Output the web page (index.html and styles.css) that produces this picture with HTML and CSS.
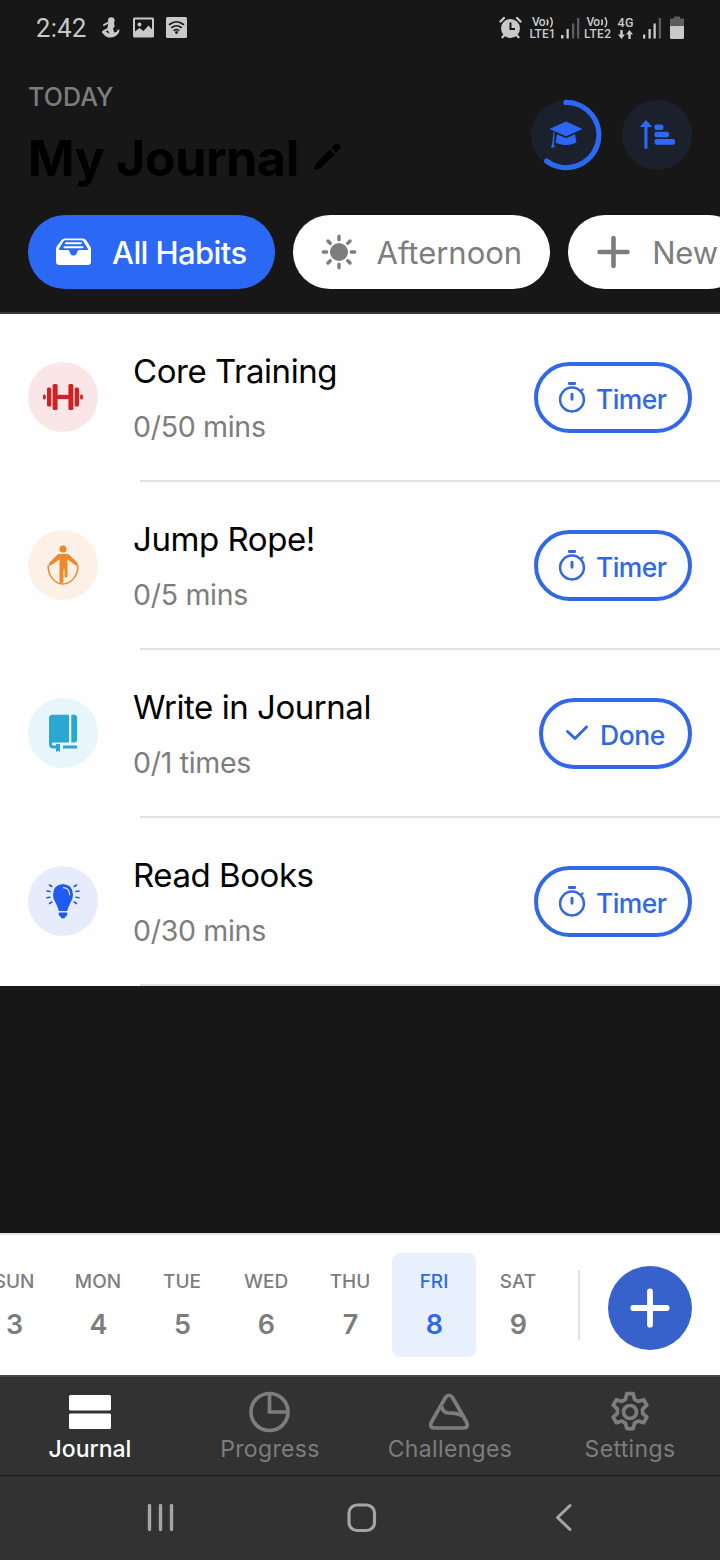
FILE: index.html
```html
<!DOCTYPE html>
<html lang="en">
<head>
<meta charset="utf-8">
<title>My Journal</title>
<link rel="stylesheet" href="styles.css">
</head>
<body>
<div class="app">
  <div class="status">
    <span class="clock">2:42</span>
    <svg class="status-left" width="92" height="24" viewBox="98 16 92 24" fill="#c9c9c9">
      <circle cx="111.300" cy="20.500" r="3.300"/>
      <path d="M108.500 22.500h5.500l.6 4-1.600 2 1.200 4 2.600-.8 1-2.300 1.700.4c-.3 4-3.500 7.700-9 7.700-2.600 0-4.500-.8-6.300-2.600l-2.200-2.400c0-1.200.7-2 2.300-2.700l3-1.500z"/>
      <path d="M108.500 22.500l-4.500 2.500" stroke="#c9c9c9" stroke-width="2" stroke-linecap="round"/>
      <path d="M105.500 31.200l2.500-.8 1.500 3.500z" fill="#171717"/>
      <path fill-rule="evenodd" d="M134.500 17.500h18a1.500 1.500 0 0 1 1.500 1.500v17a1.500 1.500 0 0 1-1.500 1.500h-18a1.500 1.500 0 0 1-1.500-1.500V19a1.500 1.500 0 0 1 1.500-1.500zM135 19.500v12l4.500-3.500 4 3 5-5.500 3.500 4v-10z"/>
      <circle cx="139.500" cy="24.500" r="2"/>
      <rect x="166" y="17" width="21" height="21" rx="1.500"/>
      <g fill="none" stroke="#171717" stroke-width="1.600" stroke-linecap="round"><path d="M169.500 24.500q7-5.500 14 0M171.800 27.500q4.700-3.600 9.400 0M174.100 30.300q2.400-1.700 4.800 0"/></g>
      <circle cx="176.500" cy="32.500" r="1.400" fill="#171717"/>
    </svg>
    <svg class="status-right" width="188" height="26" viewBox="499 15 188 26" fill="#c9c9c9">
      <circle cx="510.500" cy="28.500" r="9.500"/>
      <g stroke="#c9c9c9" stroke-width="2.400" stroke-linecap="round"><path d="M500.500 21.500l3.500-3.500M520.500 21.500l-3.500-3.500M504.500 35l-2 2.200M516.500 35l2 2.200"/></g>
      <path d="M510.500 22.500v6.500h4.500" fill="none" stroke="#171717" stroke-width="2"/>
      <g class="net">
        <text x="532" y="26" textLength="13.500">Vo</text><text x="586.500" y="26" textLength="13.500">Vo</text>
        <text x="529.500" y="38" textLength="26">LTE1</text><text x="584" y="38" textLength="27">LTE2</text>
        <text class="net-lg" x="617.500" y="27" textLength="16">4G</text>
      </g>
      <g fill="none" stroke="#c9c9c9" stroke-width="1.500"><path d="M547 19.500q1.800 2.800 0 5.800M550.300 17.300q4 5 0 10M601.500 19.500q1.800 2.800 0 5.800M604.800 17.300q4 5 0 10"/></g>
      <path d="M561 35h2.500v3.500H561zM566.500 29h2.300v9.500h-2.300z"/>
      <path d="M572 23.500h2.300v15H572zM577 18h2.300v20.500H577z" fill="#5d5d5d"/>
      <path d="M620.300 30h2.400v4.500h2.300l-3.500 4.500-3.500-4.500h2.300zM628.300 39h2.400v-4.500h2.300l-3.500-4.500-3.500 4.500h2.300z"/>
      <path d="M643 34.500h2.300v4H643zM648.500 29h2.300v9.500h-2.300zM653.500 23.500h2.300v15h-2.300z"/>
      <path d="M658.700 18h2.300v20.500h-2.300z" fill="#5d5d5d"/>
      <path d="M674 16.500h6v2h4v8h-14v-8h4z" fill="#5d5d5d"/>
      <path d="M670 26h14v11.500a1.500 1.500 0 0 1-1.500 1.500h-11a1.500 1.500 0 0 1-1.500-1.500z"/>
    </svg>
  </div>

  <header class="header">
    <div class="heading">
      <div class="today">TODAY</div>
      <div class="title-row">
        <h1 class="title">My Journal</h1>
        <svg width="28" height="28" viewBox="313 144 28 28"><path d="M314 170l1.500-6 14.500-14.500 4.800 4.700L320.500 168.500zM331.500 148l3-3q3-2.600 5 0 2 2.500-.2 4.600l-3 3z"/></svg>
      </div>
    </div>
    <div class="actions">
      <svg width="72" height="72" viewBox="530.500 99.500 72 72">
        <circle cx="566.500" cy="135.500" r="35" fill="#1a212d"/>
        <path d="M566.500 102.900a32.600 32.600 0 1 1-19.300 58.700" fill="none" stroke="#2b68f5" stroke-width="5.200" stroke-linecap="round"/>
        <g fill="#2b68f5"><path d="M566.500 122l16.500 7.500-16.500 7.300-16.500-7.300z"/><path d="M557.500 134.800l9 4 9-4 1.500 8q-4 2.700-10.500 2.700t-10.500-2.700z"/><path d="M554 132.500l1.200.5-.8 11.500 1 3.500h-4l1.300-3.500z"/></g>
      </svg>
      <svg width="70" height="70" viewBox="622 100 70 70">
        <circle cx="657" cy="135" r="35" fill="#1a212d"/>
        <g fill="#2b68f5"><path d="M644.300 147.500a1.600 1.600 0 0 0 3.200 0v-20.500h4q.6-.3 0-1l-5.500-6-5.500 6q-.6.700 0 1h3.800z"/><rect x="654.500" y="124.500" width="9" height="5.500" rx="2"/><rect x="654.500" y="131.700" width="14.500" height="5.500" rx="2"/><rect x="654.500" y="139" width="20.500" height="5.800" rx="2"/></g>
      </svg>
    </div>
  </header>

  <div class="chips">
    <div class="chip chip-active">
      <svg width="36" height="28" viewBox="56 238.500 36 28"><path fill-rule="evenodd" fill="#fff" d="M64.500 239h18.500q2 0 3 1.500l4 6q1 1.500 1 3.500v12q0 3.500-3.500 3.500h-28q-3.500 0-3.500-3.500v-12q0-2 1-3.500l4.500-6q1-1.500 3-1.500zM65 240.800q-1 0-1.500.8L59 249.500q-.5 1 .5 1h8q1.500 0 2 1.300 1 4.200 4 4.200t4-4.200q.5-1.300 2-1.300h8q1 0 .5-1l-5-7.900q-.5-.8-1.500-.8z"/><path d="M66 243.800h15M64.500 247.700h18" stroke="#fff" stroke-width="2" stroke-linecap="round"/></svg>
      <span>All Habits</span>
    </div>
    <div class="chip">
      <svg width="36" height="36" viewBox="320.500 234.500 36 36"><circle cx="338.500" cy="252.500" r="9" fill="#7d7d7d"/><path stroke="#7d7d7d" stroke-width="3.400" stroke-linecap="round" d="M338.500 236.800v3.400M338.500 264.800v3.400M322.800 252.500h3.400M350.800 252.500h3.400M327.500 241.500l2.200 2.200M347.300 261.300l2.200 2.200M349.500 241.500l-2.200 2.200M329.700 261.300l-2.200 2.200"/></svg>
      <span class="afternoon">Afternoon</span>
    </div>
    <div class="chip">
      <svg width="36" height="36" viewBox="596 234.500 36 36"><path stroke="#7d7d7d" stroke-width="4.600" stroke-linecap="round" d="M599.500 252.500h28M613.500 238.500v28"/></svg>
      <span class="new">New</span>
    </div>
  </div>

  <main class="habits">
    <div class="habit">
      <div class="badge red"><svg width="70" height="70" viewBox="28 362 70 70" fill="#d02224"><rect x="43" y="394.500" width="2.700" height="5" rx="1.300"/><rect x="47" y="387.500" width="4.300" height="19" rx="1.500"/><rect x="52.600" y="384" width="5" height="26" rx="1.500"/><path d="M57 394.800h12v4.200H57z"/><rect x="68.400" y="384" width="5" height="26" rx="1.500"/><rect x="74.700" y="387.500" width="4.300" height="19" rx="1.500"/><rect x="80.200" y="394.500" width="2.700" height="5" rx="1.300"/></svg></div>
      <div class="text"><div class="name">Core Training</div><div class="goal">0/50 mins</div></div>
      <div class="btn"><svg class="timer" width="28" height="32" viewBox="0 0 28 32"><g fill="none" stroke="#3168e0" stroke-linecap="round"><circle cx="14" cy="18.500" r="11.900" stroke-width="2.500"/><path stroke-width="2.900" d="M11.300 2.500h5.400M14 13.200v5"/><path stroke-width="2.200" d="M23.300 9.500l1.300-1"/></g></svg><span>Timer</span></div>
    </div>
    <div class="habit">
      <div class="badge orange"><svg width="70" height="70" viewBox="28 530 70 70" fill="#ec8a2b"><circle cx="63" cy="549" r="3.600"/><path d="M59 554h8q1.500 0 2.500 1l8.500 8.500-1.300 2.500-9.200-6.500v16.500q0 1.500-1.500 1.500t-1.500-1.500V569h-1v12.500q0 1.500-2 1.500t-2-1.500v-22l-9.500 6.500-1.500-2.500 8.500-8.500q1-1 2-1z"/><path d="M48.200 565c-.5 11 7 19 14.800 19s15.300-8 14.800-19" fill="none" stroke="#ec8a2b" stroke-width="1.500"/></svg></div>
      <div class="text"><div class="name">Jump Rope!</div><div class="goal">0/5 mins</div></div>
      <div class="btn"><svg class="timer" width="28" height="32" viewBox="0 0 28 32"><g fill="none" stroke="#3168e0" stroke-linecap="round"><circle cx="14" cy="18.500" r="11.900" stroke-width="2.500"/><path stroke-width="2.900" d="M11.300 2.500h5.400M14 13.200v5"/><path stroke-width="2.200" d="M23.300 9.500l1.300-1"/></g></svg><span>Timer</span></div>
    </div>
    <div class="habit">
      <div class="badge cyan"><svg width="70" height="70" viewBox="28 698 70 70" fill="#2ba8d1"><path d="M52.500 714.800H69v27.700H53.500q-1.700 0-1.700 1.300 0 1.700 1.700 1.700h2.500v3h-2.500q-4.500 0-4.500-4.500v-25.700q0-3.500 3.500-3.500z"/><path d="M71.300 714.800h2.500q3.300 0 3.300 3.300v21.200q0 3.200-3.300 3.200h-2.500zM56 744h4v8l-2-1.300-2 1.300zM63 745.500h14v3H63z"/></svg></div>
      <div class="text"><div class="name">Write in Journal</div><div class="goal">0/1 times</div></div>
      <div class="btn done"><svg class="check" width="26" height="20" viewBox="0 0 26 20"><path d="M3.500 7.500l7.500 7L22.500 3" fill="none" stroke="#3168e0" stroke-width="3" stroke-linecap="round" stroke-linejoin="round"/></svg><span>Done</span></div>
    </div>
    <div class="habit">
      <div class="badge blue"><svg width="70" height="70" viewBox="28 866 70 70" fill="#1f5bf2"><path d="M63 880q10 .5 10 11 0 3.500-2.500 7.500l-2 4.500-1.300 4h-8.400l-1.300-4-2-4.500Q53 894.500 53 891q0-10.500 10-11zM58.800 908.500h8.400v2.300q0 1.300-1.700 1.600 0 2-2.500 2t-2.500-2q-1.700-.3-1.700-1.600z" transform="translate(0 4)"/><path d="M63.500 887.700q6 .5 6.200 7" fill="none" stroke="#e7ecfd" stroke-width="1.200" stroke-linecap="round"/><path fill="none" stroke="#1f5bf2" stroke-width="1.600" stroke-linecap="round" d="M49.500 885l2.300 1.500M47 891l3 .5M47 897.800l3-.5M49.500 903.500l2.300-1.500M76.500 885l-2.300 1.500M79 891l-3 .5M79 897.800l-3-.5M76.500 903.500l-2.300-1.500"/></svg></div>
      <div class="text"><div class="name">Read Books</div><div class="goal">0/30 mins</div></div>
      <div class="btn"><svg class="timer" width="28" height="32" viewBox="0 0 28 32"><g fill="none" stroke="#3168e0" stroke-linecap="round"><circle cx="14" cy="18.500" r="11.900" stroke-width="2.500"/><path stroke-width="2.900" d="M11.300 2.500h5.400M14 13.200v5"/><path stroke-width="2.200" d="M23.300 9.500l1.300-1"/></g></svg><span>Timer</span></div>
    </div>
  </main>

  <section class="week">
    <div class="days">
      <div class="day"><span class="dow">SUN</span><span class="num">3</span></div>
      <div class="day"><span class="dow">MON</span><span class="num">4</span></div>
      <div class="day"><span class="dow">TUE</span><span class="num">5</span></div>
      <div class="day"><span class="dow">WED</span><span class="num">6</span></div>
      <div class="day"><span class="dow">THU</span><span class="num">7</span></div>
      <div class="day selected"><span class="dow">FRI</span><span class="num">8</span></div>
      <div class="day"><span class="dow">SAT</span><span class="num">9</span></div>
    </div>
    <div class="divider"></div>
    <svg class="add" width="84" height="84" viewBox="0 0 84 84"><circle cx="42" cy="42" r="42" fill="#3762cb"/><path d="M25.300 42h33.400M42 25.300v33.400" stroke="#fff" stroke-width="5.800" stroke-linecap="round"/></svg>
  </section>

  <nav class="tabs">
    <div class="tab current"><svg width="44" height="44" viewBox="68 1390 44 44" fill="#fff"><rect x="69" y="1395" width="42" height="15.500" rx="1.500"/><rect x="69" y="1413.500" width="42" height="15.500" rx="1.500"/></svg><span>Journal</span></div>
    <div class="tab"><svg width="44" height="44" viewBox="248 1390 44 44" fill="none" stroke="#7d7d7d" stroke-width="3.700"><circle cx="269.500" cy="1412" r="18.500"/><path d="M269.500 1393.500V1412H288"/></svg><span>Progress</span></div>
    <div class="tab"><svg width="44" height="44" viewBox="428 1390 44 44" fill="none" stroke="#7d7d7d" stroke-width="3.700" stroke-linejoin="round"><path d="M445.500 1397.500q3.500-4.500 7 0l14.300 25q2.200 5.500-3.800 5.500h-28q-6 0-3.800-5.500z"/><path d="M441.500 1406.500q1.500 6 7 6.500c5 .5 9.500-.5 13.500 3"/></svg><span>Challenges</span></div>
    <div class="tab"><svg width="44" height="44" viewBox="608 1390 44 44" fill="none" stroke="#7d7d7d" stroke-width="3.700" stroke-linejoin="round"><circle cx="630" cy="1412" r="6.500"/><path d="M626.800 1393.700h6.400l1.300 5.600 3.600 2.100 5.500-1.700 3.200 5.500-4.200 3.900v4.200l4.200 3.900-3.200 5.500-5.500-1.700-3.600 2.100-1.300 5.600h-6.400l-1.300-5.600-3.600-2.100-5.500 1.700-3.200-5.500 4.200-3.900v-4.200l-4.200-3.900 3.200-5.500 5.500 1.700 3.600-2.100z"/></svg><span>Settings</span></div>
  </nav>
  <div class="system">
    <svg width="720" height="84" viewBox="0 1476 720 84" fill="none" stroke="#a5a5a5" stroke-linecap="round"><path stroke-width="3.400" d="M149.500 1505.500v24M160.500 1505.500v24M171.500 1505.500v24"/><rect x="349" y="1505" width="25.500" height="25.500" rx="8" stroke-width="3.200"/><path stroke-width="3" stroke-linejoin="round" d="M570 1505.500l-12.500 12 12.500 12"/></svg>
  </div>
</div>
</body>
</html>
```

FILE: styles.css
```css
* { box-sizing: border-box; }
body { margin: 0; background: #171717; font-family: Inter, "Liberation Sans", sans-serif; }
svg { display: block; flex: none; }
.app { width: 720px; height: 1560px; overflow: hidden; display: flex; flex-direction: column; background: #171717; }

.status { height: 56px; flex: none; display: flex; align-items: center; padding: 0 33px 0 36px; }
.clock { width: 62px; font: 25.500px/30px Roboto, sans-serif; color: #c9c9c9; letter-spacing: .4px; }
.status-right { margin-left: auto; }
.net { font: 500 12px Roboto, sans-serif; }
.net-lg { font-size: 12.500px; }

.header { height: 159px; flex: none; display: flex; justify-content: space-between; padding: 26px 28px 0; }
.today { font-size: 25px; line-height: 30px; font-weight: 500; color: #7d7d7d; letter-spacing: .1px; }
.title-row { display: flex; align-items: center; gap: 14px; margin-top: 15px; }
.title { margin: 0; font-size: 50px; line-height: 62px; font-weight: 700; color: #000; letter-spacing: -.35px; }
.actions { display: flex; gap: 20px; align-items: center; height: 72px; margin-top: 17px; }

.chips { height: 97px; flex: none; display: flex; gap: 18px; padding-left: 28px; }
.chip { flex: none; height: 74px; border-radius: 37px; background: #fff; color: #7d7d7d; display: flex; align-items: center; gap: 20px; padding: 0 28px; font-size: 31px; letter-spacing: 0; white-space: nowrap; }
.chip-active { background: #2b68f5; color: #fff; font-weight: 500; letter-spacing: -.6px; }
.new { letter-spacing: -.2px; }

.habits { flex: none; border-top: 2px solid #3b3a3b; background: #fff; }
.habit { height: 168px; display: flex; align-items: flex-start; padding: 48px 28px 0; background: linear-gradient(#e2e2e2, #e2e2e2) 140px 166px / 580px 2px no-repeat #fefefe; }
.badge { width: 70px; height: 70px; border-radius: 50%; flex: none; }
.red { background: #fbe6e7; }
.orange { background: #fdf1e7; }
.cyan { background: #e8f5fb; }
.blue { background: #e7ecfd; }
.text { flex: 1; margin: -11px 0 0 35px; }
.name { font-size: 33px; line-height: 40px; color: #000; letter-spacing: -.45px; white-space: nowrap; }
.goal { font-size: 28.500px; line-height: 36px; margin-top: 18px; color: #7d7d7d; font-weight: 400; letter-spacing: -.3px; white-space: nowrap; }
.btn { width: 158px; height: 71px; border: 4px solid #3168e8; border-radius: 36px; display: flex; align-items: center; padding-left: 20px; gap: 10px; color: #3168e0; font-size: 26.500px; font-weight: 500; letter-spacing: -.6px; }
.btn span { padding-top: 2px; }
.timer { margin-top: -1px; }
.done { width: 153px; padding-left: 21px; letter-spacing: -.4px; }

.week { margin-top: auto; height: 142px; flex: none; background: #fff; border-top: 2px solid #e2e2e2; display: flex; align-items: center; padding: 0 28px 0 0; }
.days { display: flex; margin-left: -28px; }
.day { width: 84px; height: 104px; display: flex; flex-direction: column; align-items: center; padding-top: 17px; border-radius: 8px; color: #7d7d7d; }
.selected { background: #e8f0fe; color: #3168e8; }
.dow { font-size: 19px; line-height: 24px; font-weight: 500; letter-spacing: 0; }
.num { font-size: 27px; line-height: 32px; font-weight: 600; margin-top: 15px; padding-left: 1px; }
.divider { width: 2px; height: 70px; background: #e2e2e2; margin-left: 18px; }
.add { margin-left: auto; margin-top: 6px; }

.tabs { height: 101px; flex: none; display: flex; background: #323232; border-top: 2px solid #444; border-bottom: 1px solid #1c1c1c; }
.tab { flex: 1; display: flex; flex-direction: column; align-items: center; padding-top: 13px; font-size: 23px; line-height: 28px; color: #7d7d7d; letter-spacing: .35px; }
.tab span { margin-top: 1px; }
.current { color: #fff; font-weight: 500; letter-spacing: 0; }
.system { height: 84px; flex: none; background: #323232; }
```
